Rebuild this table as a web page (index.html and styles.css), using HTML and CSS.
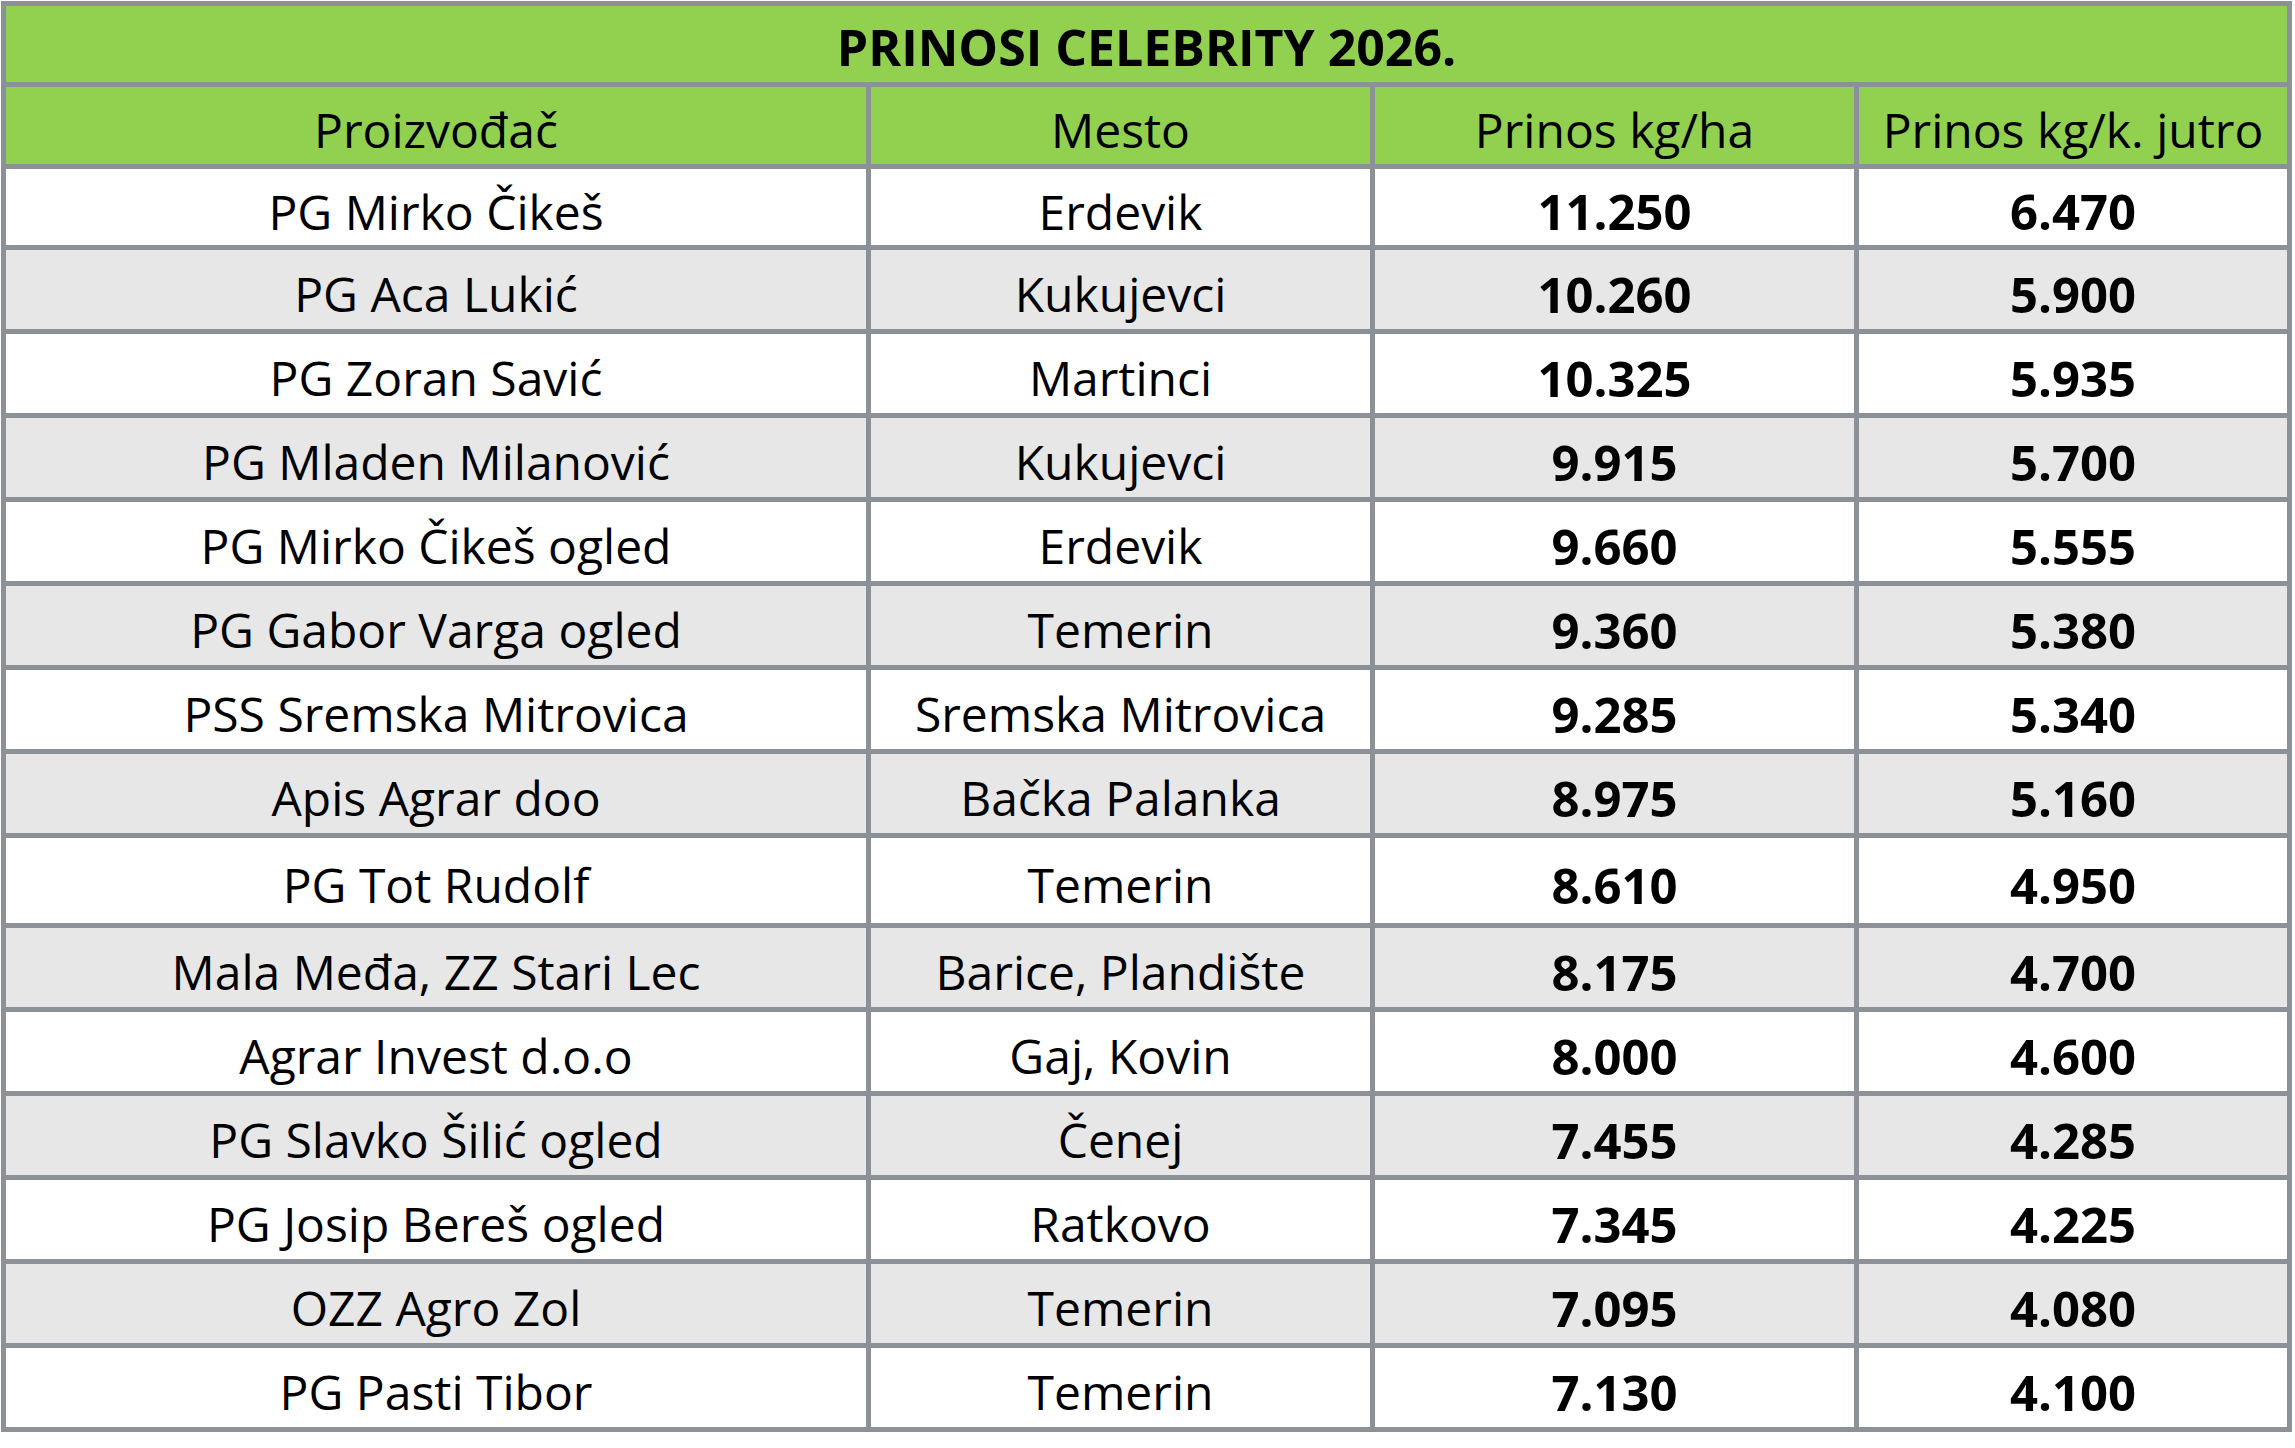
FILE: index.html
```html
<!DOCTYPE html>
<html lang="sr">
<head>
<meta charset="utf-8">
<title>Prinosi Celebrity 2026.</title>
<link rel="stylesheet" href="styles.css">
</head>
<body>
<div class="sheet" role="table" aria-label="PRINOSI CELEBRITY 2026.">
  <div class="cell title" role="rowheader">PRINOSI CELEBRITY 2026.</div>

  <div class="cell head" role="columnheader">Proizvođač</div>
  <div class="cell head" role="columnheader">Mesto</div>
  <div class="cell head" role="columnheader">Prinos kg/ha</div>
  <div class="cell head" role="columnheader">Prinos kg/k. jutro</div>

  <div class="cell">PG Mirko Čikeš</div><div class="cell">Erdevik</div><div class="cell num">11.250</div><div class="cell num">6.470</div>
  <div class="cell alt">PG Aca Lukić</div><div class="cell alt">Kukujevci</div><div class="cell alt num">10.260</div><div class="cell alt num">5.900</div>
  <div class="cell">PG Zoran Savić</div><div class="cell">Martinci</div><div class="cell num">10.325</div><div class="cell num">5.935</div>
  <div class="cell alt">PG Mladen Milanović</div><div class="cell alt">Kukujevci</div><div class="cell alt num">9.915</div><div class="cell alt num">5.700</div>
  <div class="cell">PG Mirko Čikeš ogled</div><div class="cell">Erdevik</div><div class="cell num">9.660</div><div class="cell num">5.555</div>
  <div class="cell alt">PG Gabor Varga ogled</div><div class="cell alt">Temerin</div><div class="cell alt num">9.360</div><div class="cell alt num">5.380</div>
  <div class="cell">PSS Sremska Mitrovica</div><div class="cell">Sremska Mitrovica</div><div class="cell num">9.285</div><div class="cell num">5.340</div>
  <div class="cell alt">Apis Agrar doo</div><div class="cell alt">Bačka Palanka</div><div class="cell alt num">8.975</div><div class="cell alt num">5.160</div>
  <div class="cell">PG Tot Rudolf</div><div class="cell">Temerin</div><div class="cell num">8.610</div><div class="cell num">4.950</div>
  <div class="cell alt">Mala Međa, ZZ Stari Lec</div><div class="cell alt">Barice, Plandište</div><div class="cell alt num">8.175</div><div class="cell alt num">4.700</div>
  <div class="cell">Agrar Invest d.o.o</div><div class="cell">Gaj, Kovin</div><div class="cell num">8.000</div><div class="cell num">4.600</div>
  <div class="cell alt">PG Slavko Šilić ogled</div><div class="cell alt">Čenej</div><div class="cell alt num">7.455</div><div class="cell alt num">4.285</div>
  <div class="cell">PG Josip Bereš ogled</div><div class="cell">Ratkovo</div><div class="cell num">7.345</div><div class="cell num">4.225</div>
  <div class="cell alt">OZZ Agro Zol</div><div class="cell alt">Temerin</div><div class="cell alt num">7.095</div><div class="cell alt num">4.080</div>
  <div class="cell">PG Pasti Tibor</div><div class="cell">Temerin</div><div class="cell num">7.130</div><div class="cell num">4.100</div>
</div>
</body>
</html>
```

FILE: styles.css
```css
html, body {
  margin: 0;
  padding: 0;
  background: #ffffff;
}

body {
  padding: 1px 0 0 1px;
  font-family: "Open Sans", "Noto Sans", "Liberation Sans", sans-serif;
  color: #000000;
}

.sheet {
  display: grid;
  width: max-content;
  grid-template-columns: 860px 499px 479px 428px;
  grid-template-rows: 76px 77px 76px repeat(7, 79px) 85px repeat(6, 79px);
  gap: 5px;
  padding: 5px;
  background: #8c9097;
}

.cell {
  display: flex;
  align-items: center;
  justify-content: center;
  padding-top: 9px;
  box-sizing: border-box;
  background: #ffffff;
  font-size: 48px;
  line-height: 1;
  white-space: nowrap;
  overflow: hidden;
}

.title {
  grid-column: 1 / -1;
  padding-top: 6px;
  background: #92d050;
  font-size: 50px;
  font-weight: 700;
}

.head {
  background: #92d050;
}

.alt {
  background: #e7e7e7;
}

.num {
  font-size: 49px;
  font-weight: 700;
}
```
